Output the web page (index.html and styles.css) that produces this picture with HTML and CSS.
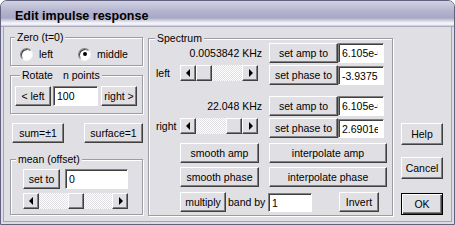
FILE: index.html
```html
<!DOCTYPE html>
<html lang="en">
<head>
    <meta charset="UTF-8">
    <title>Edit impulse response</title>
    <link rel="stylesheet" href="styles.css">
</head>
<body>
    <div class="window">
        <div class="titlebar"><span class="title">Edit impulse response</span></div>
        <div class="client">
            <div class="col-left">
                <div class="group zero">
                    <div class="group-title">Zero (t=0)</div>
                    <div class="radio-row">
                        <label class="radio first"><span class="dot"></span>left</label>
                        <label class="radio checked"><span class="dot"></span>middle</label>
                    </div>
                </div>
                <div class="group rotate">
                    <div class="group-title"><span>Rotate</span><span class="npts">n points</span></div>
                    <div class="row rotate-row">
                        <button class="btn w-left">&lt; left</button>
                        <input class="field w-npts" type="text" value="100">
                        <button class="btn w-right">right &gt;</button>
                    </div>
                </div>
                <div class="row sum-row">
                    <button class="btn w-sum">sum=±1</button>
                    <button class="btn w-surface">surface=1</button>
                </div>
                <div class="group mean">
                    <div class="group-title">mean (offset)</div>
                    <div class="row mean-row">
                        <button class="btn w-setto">set to</button>
                        <input class="field w-mean" type="text" value="0">
                    </div>
                    <div class="scroll w-meanscroll thumb-mid">
                        <span class="sb-btn"><i class="arrow-left"></i></span>
                        <span class="sb-track"><span class="sb-thumb"></span></span>
                        <span class="sb-btn"><i class="arrow-right"></i></span>
                    </div>
                </div>
            </div>

            <div class="group spectrum">
                <div class="group-title">Spectrum</div>
                <div class="srow row-a">
                    <span class="freq">0.0053842 KHz</span>
                    <button class="btn w-set gap-set">set amp to</button>
                    <input class="field w-val" type="text" value="6.105e-005">
                </div>
                <div class="srow row-b">
                    <span class="side-label">left</span>
                    <div class="scroll w-sscroll thumb-start">
                        <span class="sb-btn"><i class="arrow-left"></i></span>
                        <span class="sb-track"><span class="sb-thumb"></span></span>
                        <span class="sb-btn"><i class="arrow-right"></i></span>
                    </div>
                    <button class="btn w-set gap-scroll">set phase to</button>
                    <input class="field w-val low" type="text" value="-3.9375">
                </div>
                <div class="srow row-c">
                    <span class="freq">22.048 KHz</span>
                    <button class="btn w-set gap-set">set amp to</button>
                    <input class="field w-val" type="text" value="6.105e-005">
                </div>
                <div class="srow row-d">
                    <span class="side-label">right</span>
                    <div class="scroll w-sscroll thumb-end">
                        <span class="sb-btn"><i class="arrow-left"></i></span>
                        <span class="sb-track"><span class="sb-thumb"></span></span>
                        <span class="sb-btn"><i class="arrow-right"></i></span>
                    </div>
                    <button class="btn w-set gap-scroll">set phase to</button>
                    <input class="field w-val low" type="text" value="2.6901e-001">
                </div>
                <div class="srow row-e">
                    <button class="btn w-smooth">smooth amp</button>
                    <button class="btn w-interp">interpolate amp</button>
                </div>
                <div class="srow row-f">
                    <button class="btn w-smooth">smooth phase</button>
                    <button class="btn w-interp">interpolate phase</button>
                </div>
                <div class="srow row-g">
                    <button class="btn w-multiply">multiply</button>
                    <span class="band-label">band by</span>
                    <input class="field w-band low" type="text" value="1">
                    <button class="btn w-invert">Invert</button>
                </div>
            </div>

            <div class="col-right">
                <button class="btn w-side help">Help</button>
                <button class="btn w-side cancel">Cancel</button>
                <button class="btn w-side ok default">OK</button>
            </div>
        </div>
    </div>
</body>
</html>
```

FILE: styles.css
```css
body {
    margin: 0;
    font-family: "Liberation Sans", Arial, sans-serif;
    font-size: 10.5px;
    color: #000;
    background-color: #fff;
}
.window {
    width: 455px;
    height: 225px;
    box-sizing: border-box;
    border: 1px solid #62627e;
    border-radius: 7px 7px 0 0;
    overflow: hidden;
    display: flex;
    flex-direction: column;
    background-color: #dcdce6;
}
.titlebar {
    height: 26px;
    flex: none;
    background: linear-gradient(to bottom, #d2d2e4 0, #b4b4cf 10px, #a8a8c6 17px, #d8d8e6 20px, #f6f6fa 22px, #ececf2 24px, #b8b8c8 25px, #a0a0b4 26px);
}
.title {
    display: block;
    padding: 8px 0 0 14px;
    font-weight: bold;
    font-size: 12.5px;
    line-height: 14px;
}
.client {
    flex: 1;
    margin: 0 2px 2px;
    border: 1px solid #a4a4b6;
    border-top: none;
    background-color: #e0dfe3;
    display: flex;
}

/* group boxes */
.group {
    box-sizing: border-box;
    border: 1px solid #9c9ca4;
    box-shadow: inset 1px 1px #fff, 1px 1px #fff;
}
.group-title {
    width: fit-content;
    margin: -7px 0 0 4px;
    padding: 0 2px;
    line-height: 12px;
    background-color: #e0dfe3;
    white-space: nowrap;
}
.npts {
    margin-left: 10px;
}

/* left column */
.col-left {
    width: 133px;
    margin-left: 6px;
    display: flex;
    flex-direction: column;
}
.zero {
    margin-top: 10px;
    height: 29px;
}
.radio-row {
    display: flex;
    margin: 4px 0 0 9px;
    height: 14px;
}
.radio {
    display: flex;
    align-items: center;
}
.radio.first {
    width: 58px;
}
.dot {
    width: 13px;
    height: 13px;
    box-sizing: border-box;
    margin-right: 6px;
    border-radius: 50%;
    border: 1px solid;
    border-color: #808080 #f4f4f4 #f4f4f4 #808080;
    background-color: #fff;
    box-shadow: inset 1px 1px #404040;
    display: flex;
    align-items: center;
    justify-content: center;
}
.radio.checked .dot::after {
    content: "";
    width: 4px;
    height: 4px;
    border-radius: 50%;
    background-color: #000;
}
.rotate {
    margin-top: 9px;
    height: 39px;
}
.rotate .group-title {
    margin-left: 9px;
}
.row {
    display: flex;
}
.rotate-row {
    margin: 5px 0 0 4px;
}
.w-left, .w-right {
    width: 36px;
}
.w-npts {
    width: 45px;
    margin-left: 2px;
}
.w-right {
    margin-left: 3px;
}
.sum-row {
    margin-top: 9px;
}
.w-sum {
    width: 52px;
    margin-left: 2px;
}
.w-surface {
    width: 59px;
    margin-left: 20px;
}
.mean {
    margin-top: 16px;
    height: 56px;
}
.mean .group-title {
    margin-left: 5px;
}
.mean-row {
    margin: 4px 0 0 12px;
}
.w-setto {
    width: 37px;
}
.w-mean {
    width: 63px;
    margin-left: 5px;
}
.w-meanscroll {
    width: 105px;
    margin: 4px 0 0 12px;
}

/* buttons and fields */
.btn {
    height: 20px;
    box-sizing: border-box;
    padding: 0;
    font: inherit;
    color: #000;
    background-color: #e0dfe3;
    border: 1px solid;
    border-color: #fff #404040 #404040 #fff;
    box-shadow: inset -1px -1px #808080;
    white-space: nowrap;
    flex: none;
}
.btn.default {
    border-color: #000;
    box-shadow: inset 1px 1px #fff, inset -1px -1px #404040, inset -2px -2px #808080;
}
.field {
    height: 20px;
    box-sizing: border-box;
    padding: 0 5px 0 3px;
    font: inherit;
    color: #000;
    background-color: #fff;
    border: 1px solid;
    border-color: #808080 #fff #fff #808080;
    box-shadow: inset 1px 1px #404040;
    outline: none;
    flex: none;
}
.field.low {
    height: 19px;
    margin-top: 1px;
}

/* scroll bars */
.scroll {
    display: flex;
    height: 16px;
    flex: none;
}
.sb-btn, .sb-thumb {
    width: 16px;
    height: 16px;
    box-sizing: border-box;
    background-color: #e0dfe3;
    border: 1px solid;
    border-color: #fff #404040 #404040 #fff;
    box-shadow: inset -1px -1px #808080;
    display: flex;
    align-items: center;
    justify-content: center;
    flex: none;
}
.sb-track {
    flex: 1;
    display: flex;
    background-color: #e0dfe3;
    background-image: conic-gradient(#fff 25%, transparent 0 50%, #fff 0 75%, transparent 0);
    background-size: 2px 2px;
}
.thumb-mid .sb-track {
    justify-content: center;
}
.thumb-end .sb-track {
    justify-content: flex-end;
}
.arrow-left, .arrow-right {
    width: 0;
    height: 0;
    border-top: 4px solid transparent;
    border-bottom: 4px solid transparent;
}
.arrow-left {
    border-right: 4px solid #000;
    margin-right: 1px;
}
.arrow-right {
    border-left: 4px solid #000;
    margin-left: 1px;
}

/* spectrum */
.spectrum {
    width: 245px;
    height: 178px;
    margin: 11px 0 0 5px;
}
.spectrum .group-title {
    margin-left: 6px;
}
.srow {
    display: flex;
    height: 20px;
}
.row-a {
    margin-top: -1px;
}
.row-b, .row-d {
    margin-top: 2px;
}
.row-c {
    margin-top: 11px;
}
.row-e, .row-g {
    margin-top: 5px;
}
.row-f {
    margin-top: 4px;
}
.freq {
    width: 113px;
    text-align: right;
    line-height: 20px;
    flex: none;
}
.side-label {
    width: 31px;
    box-sizing: border-box;
    padding-left: 7px;
    line-height: 16px;
    flex: none;
}
.w-sscroll {
    width: 78px;
}
.w-set {
    width: 69px;
}
.gap-set {
    margin-left: 7px;
}
.gap-scroll {
    margin-left: 11px;
}
.w-val {
    width: 46px;
}
.w-smooth {
    width: 79px;
    margin-left: 31px;
}
.w-interp {
    width: 118px;
    margin-left: 10px;
}
.w-multiply {
    width: 46px;
    margin-left: 31px;
}
.band-label {
    width: 40px;
    margin-left: 2px;
    line-height: 20px;
    flex: none;
}
.w-band {
    width: 44px;
}
.w-invert {
    width: 40px;
    margin-left: 27px;
}

/* right column */
.col-right {
    width: 42px;
    margin-left: 8px;
    display: flex;
    flex-direction: column;
}
.w-side {
    width: 42px;
    height: 22px;
}
.help {
    margin-top: 96px;
}
.cancel {
    margin-top: 12px;
}
.ok {
    margin-top: 14px;
}
```
